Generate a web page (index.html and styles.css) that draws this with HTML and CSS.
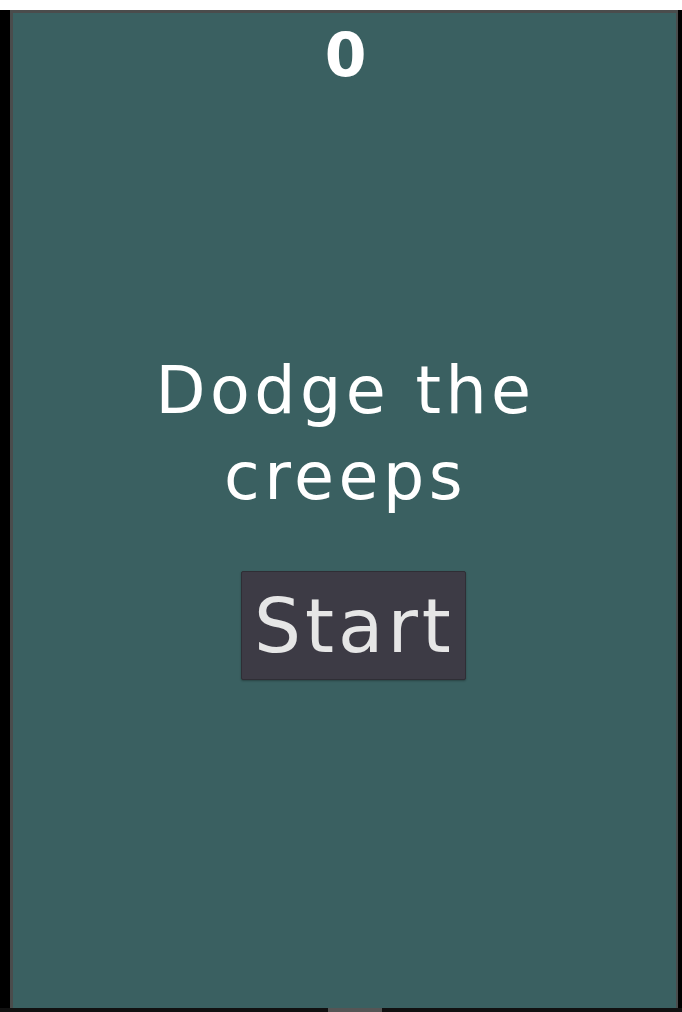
FILE: index.html
```html
<!DOCTYPE html>
<html>
<head>
<meta charset="utf-8">
<link rel="stylesheet" href="styles.css">
</head>
<body>
<div class="top-strip"></div>
<div class="frame">
  <div class="side-left"></div>
  <div class="game">
    <div class="score">0</div>
    <div class="message">Dodge the<br>creeps</div>
    <div class="btn-row"><button class="start">Start</button></div>
  </div>
  <div class="side-right"></div>
</div>
<div class="bottom-strip"><div class="handle"></div></div>
</body>
</html>
```
FILE: styles.css
```css
html, body {
  margin: 0;
  padding: 0;
  width: 682px;
  height: 1012px;
  overflow: hidden;
  background: #000;
  font-family: "DejaVu Sans", sans-serif;
}
.top-strip {
  height: 10px;
  background: #fff;
}
.frame {
  display: flex;
  height: 998px;
}
.side-left {
  width: 10px;
  background: #000;
}
.side-right {
  width: 4px;
  background: #000;
}
.game {
  flex: 1;
  background: #3a6061;
  border-top: 3px solid #4a4c4c;
  border-left: 3px solid #4a4c4c;
  border-right: 2px solid #4a4c4c;
  display: flex;
  flex-direction: column;
  align-items: center;
  color: #fff;
}
.score {
  margin-top: 7px;
  font-size: 60px;
  font-weight: bold;
  line-height: 70px;
  height: 70px;
  padding-left: 2px;
}
.message {
  margin-top: 258px;
  font-size: 65px;
  line-height: 86px;
  text-align: center;
  font-weight: normal;
  letter-spacing: 4.5px;
  padding-left: 2px;
}
.btn-row {
  margin-top: 51px;
  display: flex;
  justify-content: center;
  width: 100%;
  padding-left: 18px;
  box-sizing: border-box;
}
.start {
  width: 225px;
  height: 109px;
  background: #3d3b45;
  border: 1px solid #2f2e35;
  border-radius: 2px;
  color: #e6e6e6;
  font-family: "DejaVu Sans", sans-serif;
  font-size: 74px;
  letter-spacing: 4px;
  padding: 0 0 0 2px;
  box-shadow: 0 1px 2px rgba(0,0,0,0.3);
}
.bottom-strip {
  height: 4px;
  background: #111;
  position: relative;
}
.handle {
  position: absolute;
  left: 328px;
  top: 0;
  width: 54px;
  height: 4px;
  background: #555;
}
```
